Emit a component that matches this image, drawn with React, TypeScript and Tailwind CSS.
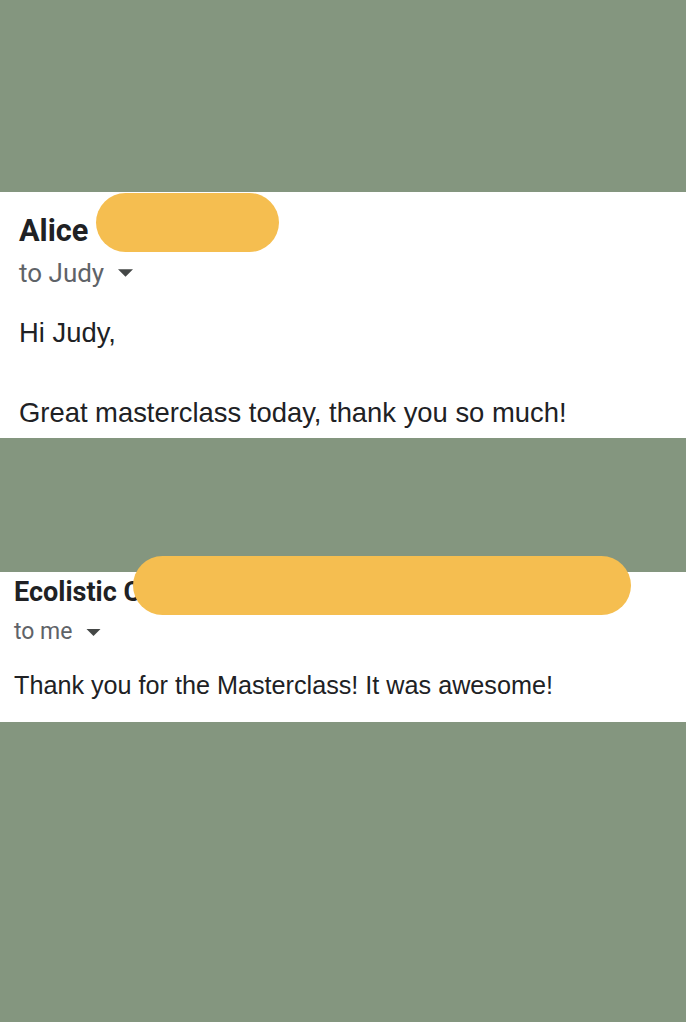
import * as React from "react";

function Caret({ className = "" }: { className?: string }) {
  return (
    <svg viewBox="0 0 10 5" className={className} aria-hidden="true">
      <path d="M0 0h10L5 5z" fill="currentColor" />
    </svg>
  );
}

export default function App() {
  return (
    <div className="min-h-[1022px] w-full bg-[#84967f] font-['Liberation_Sans',Arial,sans-serif]">
      <div className="h-[192px]" />

      {/* first mail */}
      <section className="relative bg-white pl-[19px] pt-[19px] pb-[5px] text-[#202124]">
        <div className="absolute left-[96px] top-[1px] h-[59px] w-[183px] rounded-full bg-[#f5be50]" />
        <h2 className="font-['Roboto',sans-serif] text-[30.7px] font-bold leading-[40px]">Alice</h2>
        <div className="mt-[6px] flex items-center gap-[14px] font-['Roboto',sans-serif] text-[26px] leading-[32px] text-[#5f6368]">
          <span>to Judy</span>
          <Caret className="h-[8px] w-[15px] text-[#444746]" />
        </div>
        <p className="mt-[24px] text-[27.4px] leading-[40px]">Hi Judy,</p>
        <p className="mt-[40px] text-[27.4px] leading-[40px]">Great masterclass today, thank you so much!</p>
      </section>

      <div className="h-[134px]" />

      {/* second mail */}
      <section className="relative bg-white pl-[14px] pt-[2px] pb-[20px] text-[#202124]">
        <div className="absolute left-[133px] top-[-16px] h-[59px] w-[498px] rounded-full bg-[#f5be50]" />
        <h2 className="font-['Roboto',sans-serif] text-[27px] font-bold leading-[36px]">Ecolistic C</h2>
        <div className="mt-[7px] flex items-center gap-[13px] font-['Roboto',sans-serif] text-[23px] leading-[30px] text-[#5f6368]">
          <span>to me</span>
          <Caret className="h-[7px] w-[15px] text-[#444746]" />
        </div>
        <p className="mt-[21px] text-[25.2px] leading-[34px]">Thank you for the Masterclass! It was awesome!</p>
      </section>
    </div>
  );
}
